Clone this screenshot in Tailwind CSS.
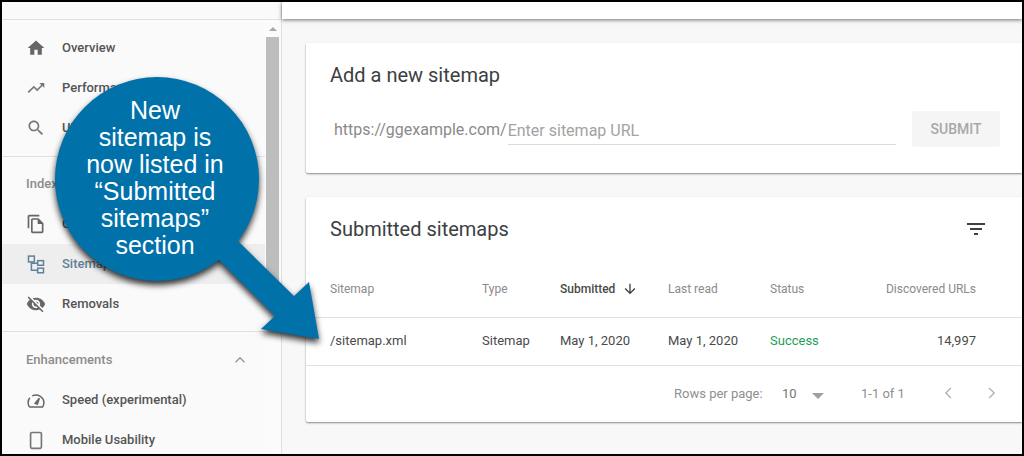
<!DOCTYPE html>
<html lang="en">
  <head>
    <meta charset="UTF-8" />
    <meta name="viewport" content="width=device-width, initial-scale=1.0" />
    <title>Sitemaps</title>
    <script src="https://cdn.jsdelivr.net/npm/@tailwindcss/browser@4"></script>
  </head>
  <body class="bg-black overflow-hidden font-['Roboto',sans-serif]">
    <div class="relative w-[1024px] h-[456px] border-2 border-black flex overflow-hidden bg-[#f8f8f8]">
      <!-- Sidebar -->
      <aside class="w-[280px] h-full flex flex-col shrink-0 bg-[#fafafa] border-r border-[#e0e0e0]">
        <div class="h-[18px] shrink-0 border-b border-[#e0e0e0] bg-[#fafafa]"></div>
        <div class="flex flex-1 min-h-0">
          <nav class="w-[263px] shrink-0 text-[13px] font-medium text-[#555555]">
            <div class="pt-[8px] pb-[8px] border-b border-[#e0e0e0]">
              <a class="h-10 pl-6 flex items-center gap-4">
                <svg viewBox="0 0 24 24" class="size-5 fill-[#666666]"><path d="M10 20v-6h4v6h5v-8h3L12 3 2 12h3v8z" /></svg>
                <span>Overview</span>
              </a>
              <a class="h-10 pl-6 flex items-center gap-4">
                <svg viewBox="0 0 24 24" class="size-5 fill-[#777777]"><path d="M16 6l2.29 2.29-4.88 4.88-4-4L2 16.59 3.41 18l6-6 4 4 6.3-6.29L22 12V6z" /></svg>
                <span>Performance</span>
              </a>
              <a class="h-10 pl-6 flex items-center gap-4">
                <svg viewBox="0 0 24 24" class="size-5 fill-[#777777]"><path d="M15.5 14h-.79l-.28-.27C15.41 12.59 16 11.11 16 9.5 16 5.91 13.09 3 9.5 3S3 5.91 3 9.5 5.91 16 9.5 16c1.61 0 3.09-.59 4.23-1.57l.27.28v.79l5 4.99L20.49 19l-4.99-5zm-6 0C7.01 14 5 11.99 5 9.5S7.01 5 9.5 5 14 7.01 14 9.5 11.99 14 9.5 14z" /></svg>
                <span>URL inspection</span>
              </a>
            </div>
            <div class="pt-[7px] pb-[7px] border-b border-[#e0e0e0]">
              <div class="h-10 pl-6 flex items-center text-[#8c8c8c]">Index</div>
              <a class="h-10 pl-6 flex items-center gap-4">
                <svg viewBox="0 0 24 24" class="size-5 fill-[#666666]"><path d="M16 1H4c-1.1 0-2 .9-2 2v14h2V3h12V1zm-1 4H8c-1.1 0-1.99.9-1.99 2L6 21c0 1.1.89 2 1.99 2H19c1.1 0 2-.9 2-2V11l-6-6zM8 21V7h6v5h5v9H8z" /></svg>
                <span>Coverage</span>
              </a>
              <a class="h-10 pl-6 flex items-center gap-4 bg-[#eeeeee] text-[#5f7f94]">
                <svg viewBox="0 0 24 24" class="size-5 fill-none stroke-[#5f8299] stroke-[1.8]">
                  <rect x="3" y="2.5" width="7" height="7" />
                  <rect x="14" y="8" width="7" height="5.5" />
                  <rect x="14" y="17" width="7" height="5.5" />
                  <path d="M6.5 9.5V19.5H14M6.5 11H14" />
                </svg>
                <span>Sitemaps</span>
              </a>
              <a class="h-10 pl-6 flex items-center gap-4">
                <svg viewBox="0 0 24 24" class="size-5 fill-[#666666]"><path d="M12 7c2.76 0 5 2.24 5 5 0 .65-.13 1.26-.36 1.83l2.92 2.92c1.51-1.26 2.7-2.89 3.43-4.75-1.73-4.39-6-7.5-11-7.5-1.4 0-2.74.25-3.98.7l2.16 2.16C10.74 7.13 11.35 7 12 7zM2 4.27l2.28 2.28.46.46C3.08 8.3 1.78 10.02 1 12c1.73 4.39 6 7.5 11 7.5 1.55 0 3.03-.3 4.38-.84l.42.42L19.73 22 21 20.73 3.27 3 2 4.27zM7.53 9.8l1.55 1.55c-.05.21-.08.43-.08.65 0 1.66 1.34 3 3 3 .22 0 .44-.03.65-.08l1.55 1.55c-.67.33-1.41.53-2.2.53-2.76 0-5-2.24-5-5 0-.79.2-1.53.53-2.2zm4.31-.78l3.15 3.15.02-.16c0-1.66-1.34-3-3-3l-.17.01z" /></svg>
                <span>Removals</span>
              </a>
            </div>
            <div class="pt-[8px]">
              <div class="h-10 pl-6 pr-[15px] flex items-center justify-between text-[#8c8c8c]">
                <span>Enhancements</span>
                <svg viewBox="0 0 24 24" class="size-5 fill-[#9a9a9a]"><path d="M12 8l-6 6 1.2 1.2 4.8-4.8 4.8 4.8L18 14z" /></svg>
              </div>
              <a class="h-10 pl-6 flex items-center gap-4">
                <svg viewBox="0 0 24 24" class="size-5 fill-none stroke-[#666666] stroke-[1.8]">
                  <path d="M4.2 20.5h15.6c1-1.5 1.7-3.3 1.7-5.2a9.5 9.5 0 0 0-14-8.2M4.2 20.5c-1-1.5-1.7-3.3-1.7-5.2 0-2.2.8-4.3 2.1-5.9" />
                  <path d="M11 16l5-6-2.5 7.2z" class="fill-[#666666]" />
                </svg>
                <span>Speed (experimental)</span>
              </a>
              <a class="h-10 pl-6 flex items-center gap-4">
                <svg viewBox="0 0 24 24" class="size-5 fill-none stroke-[#777777] stroke-2">
                  <rect x="5.5" y="3" width="13" height="19" rx="1.5" />
                </svg>
                <span>Mobile Usability</span>
              </a>
            </div>
          </nav>
          <!-- Scrollbar -->
          <div class="flex-1 flex flex-col pl-px bg-[#fbfbfb]">
            <div class="h-[17px] w-[13px] flex items-center justify-center">
              <span class="w-0 h-0 border-x-[4px] border-x-transparent border-b-[4px] border-b-[#a8a8a8]"></span>
            </div>
            <div class="w-[13px] h-[250px] bg-[#bdbdbd]"></div>
          </div>
        </div>
      </aside>

      <!-- Main column -->
      <main class="flex-1 min-w-0 flex flex-col">
        <div class="h-[17px] shrink-0 bg-white shadow-[0_1px_4px_rgba(0,0,0,0.55)]"></div>
        <div class="pl-6 pt-6 flex flex-col gap-6">
          <section class="h-[130px] bg-white rounded-l-[2px] shadow-[0_1px_2px_rgba(0,0,0,0.45)] pl-6 pr-[22px] pt-5">
            <h2 class="text-[20px] leading-6 text-[#3c4043]">Add a new sitemap</h2>
            <div class="mt-6 flex items-start">
              <span class="pl-1 pt-[7px] text-[16px] leading-6 text-[#8a8a8a]">https://ggexample.com/</span>
              <div class="w-[389px] h-[34px] ml-px border-b border-[#dcdcdc] pt-[8px] text-[16px] leading-6 text-[#a3a3a3]">Enter sitemap URL</div>
              <div class="w-[88px] h-9 ml-4 rounded-[2px] bg-[#f5f5f5] flex items-center justify-center text-[14px] font-medium text-[#a8a8a8]">SUBMIT</div>
            </div>
          </section>

          <section class="h-[225px] bg-white rounded-l-[2px] shadow-[0_1px_2px_rgba(0,0,0,0.45)] pt-5">
            <div class="pl-6 pr-[37px] h-6 flex items-center justify-between">
              <h2 class="text-[20px] leading-6 text-[#3c4043]">Submitted sitemaps</h2>
              <svg viewBox="0 0 18 14" class="w-[18px] h-[14px] fill-[#3c4043]"><path d="M0 1h18v2H0zM3 6h12v2H3zM7 11h4v2H7z" /></svg>
            </div>
            <div class="mt-5 pl-6 pr-[46px] h-[57px] border-b border-[#e0e0e0] grid grid-cols-[152px_78px_108px_102px_1fr] items-center text-[12px] text-[#8a8a8a]">
              <span>Sitemap</span>
              <span>Type</span>
              <span class="flex items-center gap-[7px] font-medium text-[#4a4a4a]">Submitted
                <svg viewBox="0 0 24 24" class="size-4 fill-[#3c4043]"><path d="M20 12l-1.41-1.41L13 16.17V4h-2v12.17l-5.58-5.59L4 12l8 8 8-8z" /></svg>
              </span>
              <span>Last read</span>
              <div class="flex justify-between">
                <span>Status</span>
                <span>Discovered URLs</span>
              </div>
            </div>
            <div class="pl-6 pr-[46px] pb-[2px] h-12 border-b border-[#e0e0e0] grid grid-cols-[152px_78px_108px_102px_1fr] items-center text-[13px] text-[#4a4a4a]">
              <span>/sitemap.xml</span>
              <span>Sitemap</span>
              <span>May 1, 2020</span>
              <span>May 1, 2020</span>
              <div class="flex justify-between">
                <span class="text-[#1e9e5a]">Success</span>
                <span>14,997</span>
              </div>
            </div>
            <div class="h-14 flex items-center text-[13px] text-[#8f8f8f] pl-[368px]">
              <span class="w-[108px]">Rows per page:</span>
              <span class="w-[30px] text-[#757575]">10</span>
              <span class="w-0 h-0 mt-[3px] border-x-[6px] border-x-transparent border-t-[6px] border-t-[#a0a0a0]"></span>
              <span class="ml-[37px] w-[75px]">1-1 of 1</span>
              <svg viewBox="0 0 24 24" class="size-6 fill-[#b4b4b4] -mt-[2px]"><path d="M15.4 7.4L14.4 6.4 8.8 12l5.6 5.6 1-1L10.8 12z" /></svg>
              <svg viewBox="0 0 24 24" class="size-6 ml-5 fill-[#b4b4b4] -mt-[2px]"><path d="M8.6 7.4l1-1 5.6 5.6-5.6 5.6-1-1 4.6-4.6z" /></svg>
            </div>
          </section>
        </div>
      </main>

      <!-- Callout over the page -->
      <svg viewBox="0 0 1024 456" class="absolute -left-[2px] -top-[2px] w-[1024px] h-[456px] drop-shadow-[0_4px_3px_rgba(0,0,0,0.8)]">
        <path class="fill-[#0071a9]" d="M239 242L294 296L309 282L319 339L261 329L275 316L219 260L180 200L200 200Z" />
        <circle cx="157" cy="179" r="102" class="fill-[#0071a9]" />
      </svg>
      <div class="absolute left-[51px] top-[95px] w-[204px] text-center text-white font-['Liberation_Sans',sans-serif] text-[25px] leading-[27px]">
        New<br />sitemap is<br />now listed in<br />“Submitted<br />sitemaps”<br />section
      </div>
    </div>
  </body>
</html>
